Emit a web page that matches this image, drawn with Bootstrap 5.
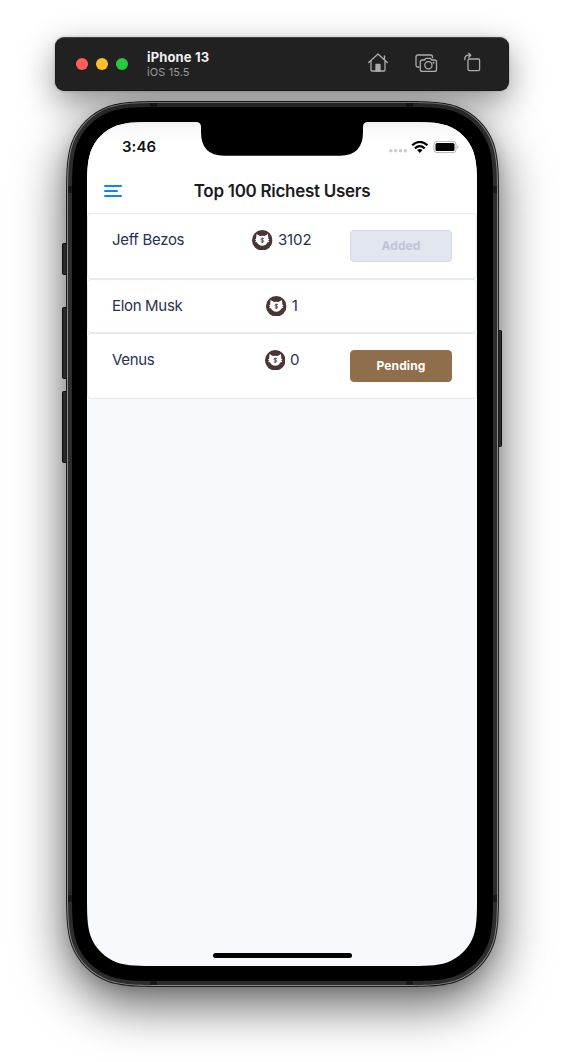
<!DOCTYPE html>
<html lang="en">
<head>
<meta charset="utf-8">
<meta name="viewport" content="width=device-width, initial-scale=1">
<title>Top 100 Richest Users</title>
<link href="https://cdn.jsdelivr.net/npm/bootstrap@5.3.0/dist/css/bootstrap.min.css" rel="stylesheet">
<style>
body{font-family:Inter,"Liberation Sans",sans-serif;background:#fff;min-height:1062px;overflow:hidden}
.stage{width:564px;height:1062px;padding-top:37px}
.sim-bar{width:454px;height:54px;margin-left:55px;background:#212121;border-radius:9px;border:1px solid #1a1a1a;border-top-color:#454545;padding:0 26px 0 20px;box-shadow:0 12px 34px rgba(0,0,0,.42),0 0 3px rgba(0,0,0,.2);z-index:2}
.light{width:12px;height:12px;border-radius:50%}
.sim-name{font-size:13px;font-weight:700;line-height:15px;color:#f0f0f0;letter-spacing:.15px}
.sim-os{font-size:11px;line-height:14px;color:#9d9d9d;letter-spacing:.1px}
.phone{width:433px;height:886px;margin:10px 0 0 66px;padding:21px 22px 21px 21px}
.phone-shadow{inset:12px;border-radius:56px;box-shadow:0 18px 50px 12px rgba(0,0,0,.62),0 3px 14px 12px rgba(0,0,0,.12)}
.phone-frame{left:-5px;top:0}
.screen{width:390px;height:844px;background:#f7f9fd;clip-path:path("M72.35 0H317.65C338.48 0 348.9 0 360.11 3.55C372.35 8 382 17.65 386.45 29.89C390 41.1 390 51.52 390 72.35V771.65C390 792.48 390 802.9 386.45 814.11C382 826.35 372.35 836 360.11 840.45C348.9 844 338.48 844 317.65 844H72.35C51.52 844 41.1 844 29.89 840.45C17.65 836 8 826.35 3.55 814.11C0 802.9 0 792.48 0 771.65V72.35C0 51.52 0 41.1 3.55 29.89C8 17.65 17.65 8 29.89 3.55C41.1 0 51.52 0 72.35 0Z")}
.status{height:47px;background:#fff;padding:4px 18px 0 35px}
.clock{font-size:15px;font-weight:600;color:#111;letter-spacing:.05px}
.notch{left:109px;top:0}
.titlebar{height:44px;background:#fff;padding:0 17px}
.titlebar h1{font-size:17px;font-weight:600;color:#1c1c1e;letter-spacing:-.29px;line-height:22px}
.user{height:66px;background:#fff;border:1px solid #e4e9f2;border-radius:4px;padding:16px 24px}
.user.short{height:54px}
.user-name,.amount{font-size:15px;line-height:20px;color:#283150}
.user-name{letter-spacing:-.32px}
.amount{letter-spacing:-.1px;gap:5px;height:20px}
.state{width:102px;height:32px;border-radius:4px;font-size:12px;font-weight:700;padding:0;letter-spacing:.1px}
.state.added{background:#e2e6ef;border-color:#d3d9e6;color:#bdc5d6;opacity:1}
.state.pending{background:#8f6e4b;border-color:#8f6e4b;color:#fff;opacity:1}
.home-line{width:139px;height:5px;border-radius:3px;background:#000;margin-bottom:8px}
</style>
</head>
<body>
<svg width="0" height="0" class="position-absolute" aria-hidden="true">
<symbol id="coin" viewBox="0 0 20 20"><circle cx="10" cy="10" r="10" fill="#4a3434"/><path d="M4.400 3.900 7.800 5.800q2.200-.5 4.400 0l3.400-1.900.4 4.700 1.200 1-1.300.5 1.100 1.600-1.800.2q-1.500 3.400-5.200 3.400t-5.200-3.400l-1.800-.2 1.100-1.600-1.300-.5 1.200-1z" fill="#fff"/><path d="M11.700 8.500q-3-1.100-3.100.4 0 .8 1.500 1.100t1.400 1.200q-.2 1.300-3 .4M10.100 7.400v5.200" fill="none" stroke="#5b4646" stroke-width=".9"/></symbol>
</svg>
<main class="stage d-flex flex-column">
  <header class="sim-bar d-flex align-items-center position-relative">
    <div class="d-flex" style="gap:8px"><span class="light" style="background:#ff5f57"></span><span class="light" style="background:#febc2e"></span><span class="light" style="background:#28c840"></span></div>
    <div style="margin-left:19px"><div class="sim-name">iPhone 13</div><div class="sim-os">iOS 15.5</div></div>
    <div class="d-flex align-items-center ms-auto pb-1" style="gap:26px">
      <svg width="22" height="22" fill="none" stroke="#adadad" stroke-width="1.300" stroke-linejoin="round" stroke-linecap="round"><path d="M1.700 11.500 11 3l9.300 8.500M4 10.300V19q0 1 1 1h12q1 0 1-1v-8.700M17.500 8.500V5"/><path d="M9 13.500h4V20H9z" fill="#adadad"/></svg>
      <svg width="23" height="22" fill="none" stroke="#adadad" stroke-width="1.300" stroke-linejoin="round"><path d="M4.500 16H3q-2 0-2-2V6q0-2 2-2h12.500q2 0 2 2v1.200"/><path d="M7.300 9h2.200l1.300-1.700h4.600L16.700 9h2.800q2 0 2 2v7.400q0 2-2 2H7.300q-2 0-2-2V11q0-2 2-2Z"/><circle cx="13.400" cy="14.200" r="3.600"/><circle cx="18.500" cy="11.800" r=".4" fill="#adadad"/></svg>
      <svg width="18" height="22" fill="none" stroke="#adadad" stroke-width="1.300" stroke-linejoin="round" stroke-linecap="round"><rect x="4" y="8" width="11.600" height="11.600" rx="1.300"/><path d="M.7 8.500C.7 5.600 1.800 4.200 4.700 4.200h1.800M4.800 2.200l2 2-2 2"/></svg>
    </div>
  </header>

  <section class="phone position-relative">
    <div class="phone-shadow position-absolute"></div>
    <svg class="phone-frame position-absolute" width="443" height="886" aria-hidden="true">
      <g fill="#292929" stroke="#0b0b0b"><rect x="1.500" y="142.500" width="6" height="31" rx="1"/><rect x="1.500" y="206.500" width="6" height="71" rx="1"/><rect x="1.500" y="290.500" width="6" height="71" rx="1"/><rect x="435.500" y="229.500" width="5" height="116" rx="1"/></g>
      <g id="shell" transform="translate(5 0)"></g>
      <g fill="#181818"><rect x="89" y="2" width="7" height="4"/><rect x="345" y="2" width="7" height="4"/><rect x="89" y="880" width="7" height="4"/><rect x="345" y="880" width="7" height="4"/><rect x="7" y="85" width="4" height="7"/><rect x="432" y="85" width="4" height="7"/><rect x="7" y="794" width="4" height="7"/><rect x="432" y="794" width="4" height="7"/></g>
    </svg>
    <div class="screen d-flex flex-column position-relative">
      <div class="status d-flex align-items-center">
        <span class="clock">3:46</span>
        <svg class="ms-auto" width="71" height="14" aria-hidden="true"><g fill="#cacaca"><circle cx="2.800" cy="9.700" r="1.700"/><circle cx="7.700" cy="9.700" r="1.700"/><circle cx="12.500" cy="9.700" r="1.700"/><circle cx="17.300" cy="9.700" r="1.700"/></g><g transform="translate(-.7 0)"><g fill="none" stroke="#000" stroke-width="2.200"><path d="M24.900 4.300Q32.500-2.500 40.100 4.300M27.600 7.300q4.900-4.200 9.800 0"/></g><path d="M29.800 9q2.700-2 5.400 0L32.500 12z"/></g><rect x="46" y=".4" width="22" height="11.200" rx="3" fill="none" stroke="#b4b4b4"/><rect x="47.500" y="1.900" width="19" height="8.200" rx="1.500"/><path d="M69.300 4.200v3.600q1.200-.5 1.200-1.800t-1.200-1.800" fill="#b4b4b4"/></svg>
      </div>
      <svg class="notch position-absolute" width="172" height="34" aria-hidden="true"><path d="M0 0q5 0 5 5v5q0 23.700 23 23.700h116q23 0 23-23.700V5q0-5 5-5z"/></svg>
      <div class="titlebar d-flex align-items-center position-relative">
        <svg width="18" height="14" stroke="#0a84ff" stroke-width="2" stroke-linecap="round" aria-label="Menu"><path d="M1 2h16M1 7h12M1 12h16"/></svg>
        <h1 class="m-0 position-absolute start-0 end-0 text-center">Top 100 Richest Users</h1>
      </div>
      <div class="user"><div class="row g-0"><div class="col-4 user-name">Jeff Bezos</div><div class="col-4 amount d-flex align-items-center justify-content-center"><svg width="20.500" height="20.500"><use href="#coin"/></svg><span>3102</span></div><div class="col-4 d-flex justify-content-end"><button class="btn state added" disabled>Added</button></div></div></div>
      <div class="user short"><div class="row g-0"><div class="col-4 user-name">Elon Musk</div><div class="col-4 amount d-flex align-items-center justify-content-center"><svg width="20.500" height="20.500"><use href="#coin"/></svg><span>1</span></div></div></div>
      <div class="user"><div class="row g-0"><div class="col-4 user-name">Venus</div><div class="col-4 amount d-flex align-items-center justify-content-center"><svg width="20.500" height="20.500"><use href="#coin"/></svg><span>0</span></div><div class="col-4 d-flex justify-content-end"><button class="btn state pending">Pending</button></div></div></div>
      <div class="home-line mt-auto mx-auto"></div>
    </div>
  </section>
</main>
<script>
// Builds a rounded rectangle with continuous-curvature corners.
function shape(i,r,fill){
  const x=i,y=i,X=433-i,Y=886-i,a=1.52866*r,b=1.08849*r,c=.868407*r,d=.631494*r,e=.0749114*r,f=.372824*r,g=.16906*r;
  const p=`M${x+a} ${y}H${X-a}C${X-b} ${y} ${X-c} ${y} ${X-d} ${y+e}C${X-f} ${y+g} ${X-g} ${y+f} ${X-e} ${y+d}C${X} ${y+c} ${X} ${y+b} ${X} ${y+a}V${Y-a}C${X} ${Y-b} ${X} ${Y-c} ${X-e} ${Y-d}C${X-g} ${Y-f} ${X-f} ${Y-g} ${X-d} ${Y-e}C${X-c} ${Y} ${X-b} ${Y} ${X-a} ${Y}H${x+a}C${x+b} ${Y} ${x+c} ${Y} ${x+d} ${Y-e}C${x+f} ${Y-g} ${x+g} ${Y-f} ${x+e} ${Y-d}C${x} ${Y-c} ${x} ${Y-b} ${x} ${Y-a}V${y+a}C${x} ${y+b} ${x} ${y+c} ${x+e} ${y+d}C${x+g} ${y+f} ${x+f} ${y+g} ${x+d} ${y+e}C${x+c} ${y} ${x+b} ${y} ${x+a} ${y}Z`;
  return `<path d="${p}" fill="${fill}"/>`;
}
document.getElementById('shell').innerHTML=shape(0,67,'#1c1c1c')+shape(1,66,'#8a8a8a')+shape(2,65,'#2d2d2d')+shape(6,61,'#000');
</script>
<script src="https://cdn.jsdelivr.net/npm/bootstrap@5.3.0/dist/js/bootstrap.bundle.min.js"></script>
</body>
</html>
